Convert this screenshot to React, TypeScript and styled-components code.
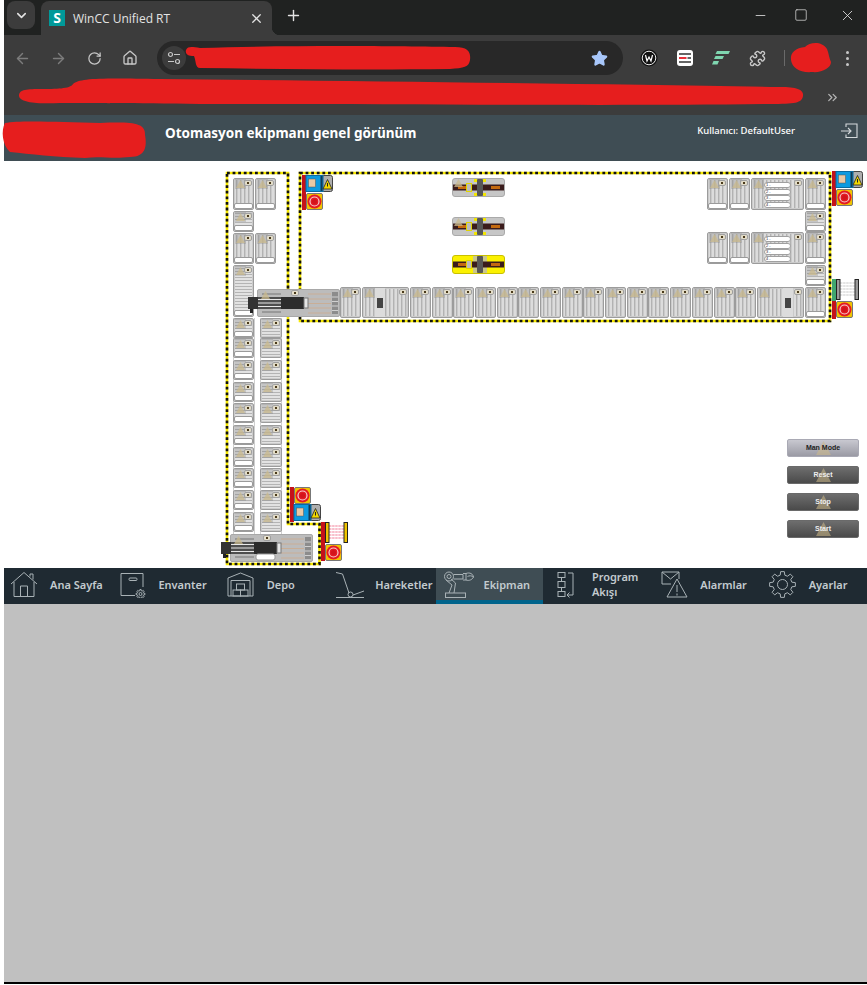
import React from "react";
import styled, { createGlobalStyle } from "styled-components";
import { ArrowLeft, ArrowRight, RotateCw, Home, X, Plus, ChevronDown, Minus, Square, Star, Puzzle, ChevronsRight } from "lucide-react";

const Global = createGlobalStyle`
  html, body { margin: 0; padding: 0; background: #fff; }
  #root { width: 867px; height: 985px; overflow: hidden; }
  * { box-sizing: border-box; }
`;

const Page = styled.div`
  position: relative;
  width: 867px;
  height: 985px;
  padding-left: 4px;
  display: flex;
  flex-direction: column;
  background: #fff;
  overflow: hidden;
`;

/* ---- browser chrome ---- */
const TabStrip = styled.div`
  height: 35px;
  background: #202221;
  display: flex;
  align-items: flex-start;
  color: #e3e3e3;
`;
const TabSearch = styled.div`
  width: 28px;
  height: 28px;
  margin: 1px 0 0 3px;
  border-radius: 8px;
  background: #3c3c3c;
  display: flex;
  align-items: center;
  justify-content: center;
`;
const ActiveTab = styled.div`
  position: relative;
  width: 231px;
  height: 34px;
  margin: 1px 0 0 6px;
  padding: 0 8px;
  background: #3c3c3c;
  border-radius: 8px 8px 0 0;
  display: flex;
  align-items: center;
  font: 12px "Open Sans", "Liberation Sans", sans-serif;
  &::after {
    content: "";
    position: absolute;
    right: -8px;
    bottom: 0;
    width: 8px;
    height: 8px;
    background: radial-gradient(circle at 100% 0, transparent 8px, #3c3c3c 8.5px);
  }
`;
const Favicon = styled.div`
  width: 16px;
  height: 16px;
  background: #009999;
  color: #fff;
  font: bold 14px/16px "Open Sans", "Liberation Sans", sans-serif;
  text-align: center;
  margin-right: 8px;
`;
const TabTitle = styled.span`
  flex: 1;
  white-space: nowrap;
`;
const NewTab = styled.div`
  width: 36px;
  height: 30px;
  margin-left: 3px;
  display: flex;
  align-items: center;
  justify-content: center;
`;
const WindowControls = styled.div`
  margin-left: auto;
  margin-right: -3px;
  display: flex;
  height: 30px;
  align-items: center;
`;
const WindowBtn = styled.div<{ $w: number }>`
  width: ${(p) => p.$w}px;
  display: flex;
  justify-content: center;
`;
const Toolbar = styled.div`
  height: 45px;
  background: #3c3c3c;
  display: flex;
  align-items: flex-start;
  padding-top: 6px;
  color: #c7c7c7;
`;
const Slot = styled.div<{ $dim?: boolean }>`
  width: 36px;
  height: 34px;
  flex: none;
  display: flex;
  align-items: center;
  justify-content: center;
  color: ${(p) => (p.$dim ? "#7c7c7c" : "#c7c7c7")};
`;
const Omnibox = styled.div`
  width: 466px;
  height: 34px;
  margin: 0 8px 0 9px;
  border-radius: 17px;
  background: #282828;
  display: flex;
  align-items: center;
  justify-content: space-between;
  padding: 0 15px 0 5px;
`;
const TuneChip = styled.div`
  width: 24px;
  height: 24px;
  border-radius: 50%;
  background: #3c3c3c;
  display: flex;
  align-items: center;
  justify-content: center;
`;
const Separator = styled.div`
  width: 1px;
  height: 16px;
  margin: 9px 0 0 9px;
  background: #6a6a6a;
`;
const Dots = styled.div`
  margin-left: auto;
  margin-right: 2px;
  width: 36px;
  height: 34px;
  display: flex;
  flex-direction: column;
  align-items: center;
  justify-content: center;
  gap: 3px;
  i { width: 3px; height: 3px; border-radius: 50%; background: #c7c7c7; }
`;
const Bookmarks = styled.div`
  height: 35px;
  background: #3c3c3c;
  display: flex;
  align-items: center;
  justify-content: flex-end;
  padding-right: 27px;
  color: #b5b5b5;
`;

/* ---- application header ---- */
const AppHeader = styled.header`
  height: 46px;
  background: #3f4d54;
  color: #fff;
  display: flex;
  align-items: flex-start;
  font-family: "Noto Sans", "Liberation Sans", sans-serif;
`;
const Title = styled.h1`
  margin: 9px 0 0 161px;
  font-size: 13.5px;
  line-height: 19px;
  font-weight: 700;
  white-space: nowrap;
`;
const UserName = styled.div`
  margin: 9px 0 0 auto;
  font-size: 9.5px;
  line-height: 14px;
  font-weight: 500;
`;
const Logout = styled.div`
  margin: 7px 9px 0 46px;
  width: 17px;
  height: 16px;
`;

/* ---- plant canvas ---- */
const Canvas = styled.main`
  position: relative;
  height: 407px;
  background: #fff;
  overflow: hidden;
`;
const ZoneLayer = styled.svg`
  position: absolute;
  left: 0;
  top: 0;
  width: 863px;
  height: 407px;
`;
type Box = { $x: number; $y: number; $w: number; $h: number };
const placed = (p: Box) => `left:${p.$x - 4}px;top:${p.$y - 161}px;width:${p.$w}px;height:${p.$h}px;`;

const Rail = styled.div<Box>`
  position: absolute;
  ${placed}
  border-left: 1px solid #cfcfcf;
  border-right: 1px solid #cfcfcf;
`;
const TileBox = styled.div<Box & { $dir: "v" | "h" }>`
  position: absolute;
  ${placed}
  border: 1px solid #9c9c9c;
  border-radius: 2px;
  box-shadow: inset 0 0 0 1px #cbcbcb;
  background: ${(p) =>
    p.$dir === "v"
      ? "repeating-linear-gradient(90deg,#dcdcdc 0 2px,#b2b2b2 2px 3px,#cacaca 3px 4px)"
      : "repeating-linear-gradient(0deg,#e2e2e2 0 2px,#b4b4b4 2px 3px)"};
`;
const Ghost = styled.svg`
  position: absolute;
  left: 1px;
  top: 0;
  width: 11px;
  height: 10px;
  background: rgba(130, 130, 130, 0.3);
`;
const Badge = styled.div`
  position: absolute;
  right: 1px;
  top: 1px;
  width: 8px;
  height: 6px;
  background: #e2dcc8;
  border: 1px solid #a0a0a0;
  border-radius: 2px;
  display: flex;
  align-items: center;
  justify-content: center;
  i { width: 2px; height: 2px; background: #4a3a1a; }
`;
const Tray = styled.div`
  position: absolute;
  left: 0;
  right: 0;
  bottom: 0;
  height: 6px;
  background: #fff;
  border: 1px solid #9a9a9a;
  border-radius: 2px;
`;
const PillStack = styled.div`
  position: absolute;
  left: 12px;
  top: 3px;
  width: 27px;
  display: flex;
  flex-direction: column;
  gap: 0.5px;
`;
const Pill = styled.div`
  height: 6px;
  background: #fff;
  border: 1px solid #a0a0a0;
  border-radius: 3px;
  font: 4px/4px "Liberation Sans", sans-serif;
  color: #223;
  padding-left: 1px;
`;
const Cross = styled.div<{ $left: number }>`
  position: absolute;
  left: ${(p) => p.$left}px;
  top: 0;
  bottom: 0;
  width: 10px;
  background: #dcdcdc;
  display: flex;
  align-items: center;
  justify-content: center;
  i { width: 6px; height: 10px; background: #444; }
`;
const Machine = styled.svg<Box>`
  position: absolute;
  ${placed}
  overflow: visible;
`;
const ButtonStack = styled.div`
  position: absolute;
  left: 783px;
  top: 278px;
  width: 72px;
  display: flex;
  flex-direction: column;
  gap: 9px;
`;
const PlantButton = styled.div<{ $light?: boolean }>`
  position: relative;
  height: 18px;
  border-radius: 2px;
  border: 1px solid ${(p) => (p.$light ? "#a9a9b4" : "#6a6a6a")};
  background: ${(p) =>
    p.$light ? "linear-gradient(#c8c8d0,#9a9aa4)" : "linear-gradient(#6e6e6e,#4a4a4a)"};
  color: ${(p) => (p.$light ? "#222" : "#eee")};
  font: bold 7px/16px "Liberation Sans", sans-serif;
  text-align: center;
  span { position: relative; }
`;
const ButtonGhost = styled.svg`
  position: absolute;
  left: 27px;
  top: 0;
  width: 17px;
  height: 16px;
`;

/* ---- navigation ---- */
const Nav = styled.nav`
  height: 36px;
  background: #1f2a32;
  display: grid;
  grid-template-columns: repeat(8, 1fr);
`;
const NavTab = styled.div<{ $active?: boolean }>`
  display: flex;
  align-items: center;
  padding-left: 6px;
  background: ${(p) => (p.$active ? "#3f4d54" : "transparent")};
  border-bottom: 4px solid ${(p) => (p.$active ? "#00648c" : "transparent")};
  color: #c3cbcf;
  font: 600 11px/15px "Noto Sans", "Liberation Sans", sans-serif;
  svg { flex: none; width: 40px; height: 28px; fill: none; stroke: #a9b2b6; stroke-width: 1; }
`;
const NavLabel = styled.span<{ $shift: number }>`
  margin-left: ${(p) => p.$shift}px;
`;
const Rest = styled.div`
  height: 380px;
  background: #c0c0c0;
  border-bottom: 2px solid #000;
`;
const Scribbles = styled.svg`
  position: absolute;
  left: 0;
  top: 0;
  width: 867px;
  height: 985px;
  pointer-events: none;
`;

/* ---- drawings ---- */
const Tri = ({ x = 0, y = 0, s = 1 }: { x?: number; y?: number; s?: number }) => (
  <path d={`M${x + 5.5 * s} ${y + 1} L${x + 10 * s} ${y + 9 * s} H${x + s} Z`} fill="#c9b98e" fillOpacity={0.75} />
);

type TileProps = { x: number; y: number; w?: number; h: number; dir?: "v" | "h"; tray?: boolean; ghost?: boolean; cross?: number; list?: boolean };
const Tile = ({ x, y, w = 21, h, dir = "v", tray, ghost = true, cross, list }: TileProps) => (
  <TileBox $x={x} $y={y} $w={w} $h={h} $dir={dir}>
    {cross !== undefined && <Cross $left={cross}><i /></Cross>}
    {ghost && (
      <Ghost viewBox="0 0 11 10"><Tri /></Ghost>
    )}
    <Badge><i /></Badge>
    {tray && <Tray />}
    {list && (
      <PillStack>
        {[1, 2, 3, 4].map((n) => (
          <Pill key={n}>{n} -</Pill>
        ))}
      </PillStack>
    )}
  </TileBox>
);

const Transfer = ({ y, yellow }: { y: number; yellow?: boolean }) => (
  <Machine $x={452} $y={y} $w={53} $h={19} viewBox="0 0 53 19">
    <rect x=".5" y=".5" width="52" height="18" rx="2.5" fill={yellow ? "#fbf100" : "#c6c6c6"} stroke={yellow ? "#c9c000" : "#aaa"} />
    {yellow && <rect x="21" y="1" width="14" height="17" fill="#c9c68c" />}
    <rect x="1" y="6.5" width="51" height="6" fill="#3a1c1c" />
    <rect x="6" y="8" width="9" height="3" fill="#c46a10" />
    <rect x="39" y="8" width="9" height="3" fill="#c46a10" />
    {!yellow && <path d="M22 1h3v3h-3zM31 1h3v3h-3zM22 15h3v3h-3zM31 15h3v3h-3z" fill="#f2e600" />}
    <rect x="14.5" y="5.5" width="5" height="8" fill="#bbb" stroke="#e0d400" />
    <rect x="25" y="1" width="6" height="17" rx="1" fill="#575757" />
    {!yellow && <Tri x={1} y={0} />}
  </Machine>
);

const Shuttle = ({ x, y, badge, tray }: { x: number; y: number; badge: number; tray?: boolean }) => (
  <Machine $x={x} $y={y} $w={92} $h={28} viewBox="0 0 92 28">
    <rect x="9.5" y=".5" width="82" height="27" rx="1.5" fill="#bcbcbc" stroke="#a8a8a8" />
    <path d="M60 5H83M60 10H83M60 14.500H83M60 19H83M60 24H83" stroke="#c9ae96" strokeWidth="1.2" />
    <path d="M84 3h6v22h-6z" fill="#8c8c8c" />
    <path d="M84 8h6M84 12.500h6M84 17h6M84 21.500h6" stroke="#d0d0d0" />
    <path d="M14 5H33M14 23H33" stroke="#777" />
    <rect x="0" y="8" width="10" height="12" fill="#333" />
    <rect x="2" y="20" width="3" height="4" fill="#222" />
    <rect x="10" y="8" width="23" height="12" fill="#4e4e4e" />
    <path d="M10 10.500H33M10 14H33M10 17.500H33" stroke="#e8e8e8" strokeWidth="1.2" />
    <rect x="33" y="8" width="23" height="12" fill="#2c2c2c" />
    <rect x="56" y="9" width="4" height="10" fill="#e5e5e5" stroke="#777" />
    <Tri x={12} y={1} />
    <rect x={badge + .5} y="1.500" width="7" height="5" rx="1.500" fill="#e6e0cc" stroke="#a0a0a0" />
    <rect x={badge + 3} y="3" width="2" height="2" fill="#4a3a1a" />
    {tray && <rect x="35" y="20" width="19" height="6" rx="2" fill="#fff" stroke="#999" />}
  </Machine>
);

const EStop = ({ x, y, bar = "#c5111a", h = 17 }: { x: number; y: number; bar?: string; h?: number }) => (
  <Machine $x={x} $y={y} $w={21} $h={h} viewBox={`0 0 21 ${h}`}>
    <rect x="0" y="0" width="4" height={h} fill={bar} />
    <rect x="4.500" y=".5" width="16" height="16" rx="1.500" fill="#f0c400" stroke="#777" />
    <circle cx="12.500" cy="8.500" r="7" fill="#e31b23" />
    <circle cx="12.500" cy="8.500" r="4.500" fill="none" stroke="#f6d0d0" strokeWidth="1.200" />
    <circle cx="12.500" cy="8.500" r="2.500" fill="#d3131b" />
  </Machine>
);

const Access = ({ x, y }: { x: number; y: number }) => (
  <Machine $x={x} $y={y} $w={31} $h={18} viewBox="0 0 31 18">
    <rect x="0" y="0" width="4" height="18" fill="#c5111a" />
    <rect x="20" y=".5" width="10.500" height="16" rx="2" fill="#aeaeae" stroke="#444" />
    <rect x="4" y=".5" width="17" height="16" fill="#0d9ae0" stroke="#0a6aa0" />
    <rect x="6.500" y="4" width="7" height="8" fill="#e9c9a6" stroke="#555" strokeWidth=".5" />
    <rect x="18.500" y="1" width="2" height="15" fill="#123a56" />
    <path d="M25.500 4.500 30 14H21Z" fill="#f3d800" stroke="#222" strokeWidth=".8" />
    <path d="M25.500 8v3.500" stroke="#222" strokeWidth="1" />
  </Machine>
);

const Curtain = ({ x, y, bar, post, beam }: { x: number; y: number; bar: string; post: string; beam: string }) => (
  <Machine $x={x} $y={y} $w={27} $h={22} viewBox="0 0 27 22">
    <rect x="0" y="0" width="4" height="22" fill={bar} />
    <path d="M8 4H23M8 7H23M8 10H23M8 13H23M8 16H23" stroke={beam} strokeWidth="1.100" strokeDasharray="2.500 .6" />
    <rect x="4.500" y=".5" width="3.500" height="20" fill={post} stroke="#222" />
    <rect x="23" y=".5" width="3.500" height="20" fill={post} stroke="#222" />
  </Machine>
);

const gear = (cx: number, cy: number, r: number) => {
  const pts: string[] = [];
  const n = 8;
  for (let i = 0; i < n; i++) {
    const a = (i / n) * Math.PI * 2 - Math.PI / 2;
    const step = Math.PI / n;
    const add = (ang: number, rad: number) =>
      pts.push(`${(cx + Math.cos(ang) * rad).toFixed(2)} ${(cy + Math.sin(ang) * rad).toFixed(2)}`);
    add(a - step * 0.62, r * 0.74);
    add(a - step * 0.36, r);
    add(a + step * 0.36, r);
    add(a + step * 0.62, r * 0.74);
  }
  return "M" + pts.join("L") + "Z";
};

const navItems: { label: React.ReactNode; active?: boolean; icon: React.ReactNode }[] = [
  {
    label: "Ana Sayfa",
    icon: <path d="M1 14 14 2.500 27 14M4 12V26.500H24V12M10.500 26.500V16H17.500V26.500M20 6.500V4H23V9.500" />,
  },
  {
    label: "Envanter",
    icon: (
      <>
        <path d="M17 25.500H3V3.500H25V17" />
        <rect x="11" y="8" width="8" height="2.500" rx="1" />
        <path d={gear(22.500, 24, 4.500)} />
        <circle cx="22.500" cy="24" r="1.500" />
      </>
    ),
  },
  {
    label: "Depo",
    icon: (
      <>
        <path d="M2 26V8L14.500 3 27 8V26ZM5 26V10.500H24V26" />
        <rect x="10.500" y="14" width="8" height="6" />
        <rect x="7" y="20" width="7.500" height="6" />
        <rect x="14.500" y="20" width="7.500" height="6" />
      </>
    ),
  },
  {
    label: "Hareketler",
    icon: (
      <>
        <path d="M2 2.500 8.500 4 15 23M19 25 30 21M2 27.500H30" />
        <circle cx="16.500" cy="24.500" r="2.500" />
      </>
    ),
  },
  {
    label: "Ekipman",
    active: true,
    icon: (
      <>
        <rect x="3.500" y="23" width="20" height="4.500" />
        <path d="M7 23 10 15 4 10M12 23 13.500 13 9 9" />
        <circle cx="7" cy="6.500" r="4.500" />
        <circle cx="7" cy="6.500" r="2" />
        <path d="M11.500 4.500H21V9H11.500M21 3.500H24V10H21M24 3.500C28 2 31 4 31.500 7 30 5.500 27 5.500 25.500 6.500M24 10C27 11 30 10 31.500 7" />
      </>
    ),
  },
  {
    label: <>Program<br />Akışı</>,
    icon: (
      <>
        <rect x="9" y="2.500" width="7" height="5" />
        <rect x="9" y="11.500" width="7" height="6" />
        <rect x="9" y="21.500" width="7" height="5" />
        <path d="M12.500 7.500V11.500M12.500 17.500V21.500M19 3H24V25H18M20.500 22.500 18 25 20.500 27.500" />
      </>
    ),
  },
  {
    label: "Alarmlar",
    icon: <path d="M14 14H5V2H22V9M5 2 13.500 9 22 2M20 9 30 27H10ZM20 15V22M20 23.500V25.500" />,
  },
  {
    label: "Ayarlar",
    icon: (
      <>
        <path d={gear(17.500, 14.500, 13)} strokeLinejoin="round" />
        <circle cx="17.500" cy="14.500" r="5" />
      </>
    ),
  },
];

const col1 = [318, 338, 360, 382, 403, 425, 447, 468, 490, 512];
const mainTiles = Array.from({ length: 16 }, (_, i) => 410 + i * 21.68);

export default function App() {
  return (
    <Page>
      <Global />
      <TabStrip>
        <TabSearch><ChevronDown size={15} strokeWidth={2.500} /></TabSearch>
        <ActiveTab>
          <Favicon>S</Favicon>
          <TabTitle>WinCC Unified RT</TabTitle>
          <X size={15} />
        </ActiveTab>
        <NewTab><Plus size={17} /></NewTab>
        <WindowControls>
          <WindowBtn $w={35}><Minus size={15} strokeWidth={1.300} /></WindowBtn>
          <WindowBtn $w={46}><Square size={14} strokeWidth={1.200} /></WindowBtn>
          <WindowBtn $w={46}><X size={17} strokeWidth={1.200} /></WindowBtn>
        </WindowControls>
      </TabStrip>

      <Toolbar>
        <Slot $dim><ArrowLeft size={17} /></Slot>
        <Slot $dim><ArrowRight size={17} /></Slot>
        <Slot><RotateCw size={15} /></Slot>
        <Slot><Home size={16} /></Slot>
        <Omnibox>
          <TuneChip>
            <svg width="14" height="14" viewBox="0 0 14 14" fill="none" stroke="#c7c7c7" strokeWidth="1.200">
              <circle cx="3.500" cy="3.500" r="2" /><path d="M7 3.500H13M1 10.500H7" /><circle cx="10.500" cy="10.500" r="2" />
            </svg>
          </TuneChip>
          <Star size={17} fill="#a8c7fa" color="#a8c7fa" />
        </Omnibox>
        <Slot>
          <svg width="18" height="18" viewBox="0 0 18 18">
            <circle cx="9" cy="9" r="8.500" fill="#111" />
            <circle cx="9" cy="9" r="6.800" fill="none" stroke="#eee" strokeWidth="1" />
            <path d="M5.500 6 7 12 9 8 11 12 12.500 6" fill="none" stroke="#fff" strokeWidth="1.200" />
          </svg>
        </Slot>
        <Slot>
          <svg width="16" height="16" viewBox="0 0 16 16">
            <rect width="16" height="16" rx="3" fill="#fff" />
            <path d="M2 4H14M2 12H14M10.500 8H14" stroke="#333" strokeWidth="1.500" />
            <path d="M2 8H9.500" stroke="#e8303a" strokeWidth="2" />
          </svg>
        </Slot>
        <Slot>
          <svg width="18" height="14" viewBox="0 0 18 14" fill="#7fd6b0">
            <path d="M5 0H18L16.500 3H3.500ZM3.500 5H12L10.500 8H2ZM1.500 10H7L5.500 13.500H0Z" />
          </svg>
        </Slot>
        <Slot><Puzzle size={17} /></Slot>
        <Separator />
        <Dots><i /><i /><i /></Dots>
      </Toolbar>

      <Bookmarks><ChevronsRight size={15} /></Bookmarks>

      <AppHeader>
        <Title>Otomasyon ekipmanı genel görünüm</Title>
        <UserName>Kullanıcı: DefaultUser</UserName>
        <Logout>
          <svg width="17" height="16" viewBox="0 0 17 16" fill="none" stroke="#d5dadc" strokeWidth="1.100">
            <path d="M5 4V1H16V14.500H5V11.500M0 8H10M7 5 10 8 7 11" />
          </svg>
        </Logout>
      </AppHeader>

      <Canvas>
        <ZoneLayer viewBox="4 161 863 407">
          {[
            "M227 173H288V524H319.500V564H227Z",
            "M300 173H830V321H300Z",
          ].map((d) => (
            <g key={d} fill="none" strokeWidth="2.600">
              <path d={d} stroke="#f6e800" />
              <path d={d} stroke="#111" strokeDasharray="2.800 2.800" />
            </g>
          ))}
        </ZoneLayer>

        <Rail $x={233} $y={318} $w={22} $h={217} />
        <Rail $x={260} $y={318} $w={22} $h={217} />

        <Tile x={233} y={178} h={32} tray />
        <Tile x={255} y={178} h={32} tray />
        <Tile x={233} y={211} h={21} dir="h" tray />
        <Tile x={233} y={233} h={31} tray />
        <Tile x={255} y={233} h={31} tray />
        <Tile x={233} y={265} h={52} dir="h" tray />
        {col1.map((y) => (
          <React.Fragment key={y}>
            <Tile x={233} y={y} h={20} dir="h" tray />
            <Tile x={260} y={y} w={22} h={20} dir="h" />
          </React.Fragment>
        ))}

        <Tile x={340} y={287} h={31} />
        <Tile x={362} y={287} w={47} h={31} cross={12} />
        {mainTiles.map((x) => (
          <Tile key={x} x={Math.round(x)} y={287} h={31} />
        ))}
        <Tile x={757} y={287} w={47} h={31} cross={25} />
        <Tile x={805} y={287} h={31} tray />

        {[178, 232].map((y) => (
          <React.Fragment key={y}>
            <Tile x={707} y={y} h={32} tray />
            <Tile x={729} y={y} h={32} tray />
            <Tile x={751} y={y} w={53} h={32} list />
            <Tile x={805} y={y} h={32} tray />
            <Tile x={805} y={y + 33} h={21} dir="h" tray />
          </React.Fragment>
        ))}

        <Transfer y={178} />
        <Transfer y={217} />
        <Transfer y={255} yellow />

        <Shuttle x={248} y={289} badge={43} />
        <Shuttle x={221} y={534} badge={42} tray />

        <Access x={302} y={175} />
        <EStop x={302} y={193} />
        <Access x={832} y={171} />
        <EStop x={832} y={189} />
        <Curtain x={832} y={279} bar="#3fa66f" post="#9a9a9a" beam="#c9c9c9" />
        <EStop x={832} y={301} h={18} />
        <EStop x={290} y={487} />
        <Access x={290} y={504} />
        <Curtain x={321} y={522} bar="#c5111a" post="#f0c400" beam="#f27f98" />
        <EStop x={321} y={544} />

        <ButtonStack>
          {["Man Mode", "Reset", "Stop", "Start"].map((t, i) => (
            <PlantButton key={t} $light={i === 0}>
              <ButtonGhost viewBox="0 0 17 16">
                <path d="M8.500 1 16 15H1Z" fill="#cdb988" fillOpacity=".55" />
              </ButtonGhost>
              <span>{t}</span>
            </PlantButton>
          ))}
        </ButtonStack>
      </Canvas>

      <Nav>
        {navItems.map((n, i) => (
          <NavTab key={i} $active={n.active}>
            <svg viewBox="0 0 40 28">{n.icon}</svg>
            <NavLabel $shift={i * 0.5}>{n.label}</NavLabel>
          </NavTab>
        ))}
      </Nav>
      <Rest />

      <Scribbles viewBox="0 0 867 985" fill="#e61e1e">
        <path d="M186 50C188 46 192 47 200 48 290 45 400 46 455 47 468 47 471 52 470 60 469 67 464 68 450 69 360 70 280 69 200 68 195 68 196 60 194 56 188 56 185 54 186 50Z" />
        <path d="M19 96C19 90 24 89 40 89 56 89 70 89 73 84 80 78 100 78 160 79 350 81 600 84 780 87 798 87 804 90 803 96 802 103 795 104 770 104 620 106 400 104 200 104 130 103 90 103 60 103 40 104 20 103 19 96Z" />
        <path d="M5 123C20 120 60 122 100 123 130 122 146 122 145 135 147 146 146 157 130 157 112 159 100 156 85 158 55 157 30 154 10 152 2 145 1 130 5 123Z" />
        <path d="M791 60C790 52 796 48 805 47 810 42 822 41 827 49 829 54 829 58 831 62 831 68 822 73 812 72 800 73 792 68 791 60Z" />
      </Scribbles>
    </Page>
  );
}
